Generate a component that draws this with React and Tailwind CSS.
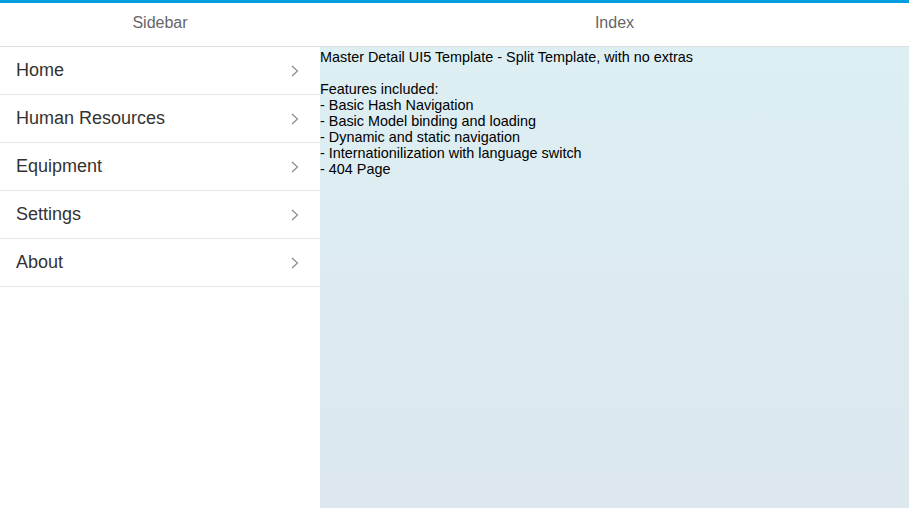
import React from 'react';

const menu = ['Home', 'Human Resources', 'Equipment', 'Settings', 'About'];

const features = [
    '- Basic Hash Navigation',
    '- Basic Model binding and loading',
    '- Dynamic and static navigation',
    '- Internationilization with language switch',
    '- 404 Page',
];

function Chevron() {
    return (
        <svg width="8" height="12" viewBox="0 0 8 12" className="shrink-0">
            <path d="M1 1 L6.5 6 L1 11" fill="none" stroke="#8c8c8c" strokeWidth="1.2" />
        </svg>
    );
}

export default function App() {
    return (
        <div className="w-[909px] h-[508px] flex flex-col bg-white font-['Liberation_Sans',Arial,sans-serif] overflow-hidden">
            <div className="h-[3px] bg-[#009de0]" />
            <div className="flex flex-1 min-h-0">
                {/* master */}
                <div className="w-[320px] flex flex-col">
                    <div className="h-[44px] flex items-center justify-center pb-[4px] text-[16px] text-[#666666] border-b border-[#dddddd]">
                        Sidebar
                    </div>
                    <ul>
                        {menu.map((item) => (
                            <li
                                key={item}
                                className="h-[48px] flex items-center justify-between pl-4 pr-[21px] border-b border-[#e5e5e5] text-[18px] text-[#333333]"
                            >
                                <span>{item}</span>
                                <Chevron />
                            </li>
                        ))}
                    </ul>
                </div>

                {/* detail */}
                <div className="flex-1 flex flex-col">
                    <div className="h-[44px] flex items-center justify-center pb-[4px] text-[16px] text-[#666666] border-b border-[#dddddd]">
                        Index
                    </div>
                    <div className="flex-1 bg-gradient-to-b from-[#ddeff3] to-[#dce7ee] text-[14.4px] leading-[16px] text-black pt-[2px]">
                        <p>Master Detail UI5 Template - Split Template, with no extras</p>
                        <p className="mt-[16px]">Features included:</p>
                        {features.map((f) => (
                            <p key={f}>{f}</p>
                        ))}
                    </div>
                </div>
            </div>
        </div>
    );
}
